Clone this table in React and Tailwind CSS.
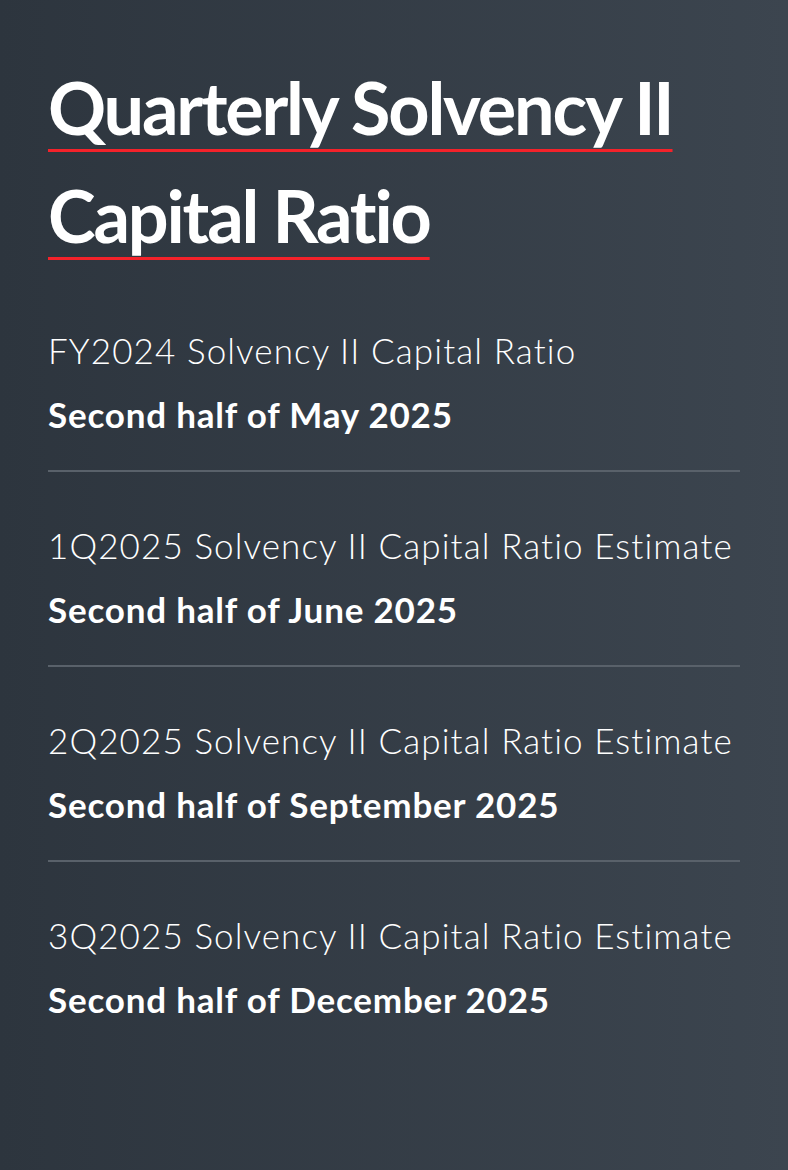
import React from 'react';

const items = [
  { title: 'FY2024 Solvency II Capital Ratio', date: 'Second half of May 2025' },
  { title: '1Q2025 Solvency II Capital Ratio Estimate', date: 'Second half of June 2025' },
  { title: '2Q2025 Solvency II Capital Ratio Estimate', date: 'Second half of September 2025' },
  { title: '3Q2025 Solvency II Capital Ratio Estimate', date: 'Second half of December 2025' },
];

const App = () => {
  return (
    <div className="min-h-[1170px] w-full bg-linear-to-r from-[#2d353e] to-[#3c454f] px-12 pt-[53px] pb-12 font-['Lato','Liberation_Sans',sans-serif] text-white">
      <h2 className="mb-2 text-[72px] font-bold leading-[108px] tracking-[-2.2px]">
        <span className="underline decoration-[#f4222a] decoration-[3px] underline-offset-[14px] [text-decoration-skip-ink:none]">
          Quarterly Solvency II Capital Ratio
        </span>
      </h2>

      <ul>
        {items.map((item, i) => (
          <li
            key={i}
            className={`pt-12 pb-[30px] ${i < items.length - 1 ? 'border-b-2 border-[#59616a]' : ''}`}
          >
            <p className="mb-[13px] text-[35px] font-light leading-[51px] tracking-[1.1px] text-white">{item.title}</p>
            <p className="text-[35px] font-bold leading-[51px] tracking-[0.8px]">{item.date}</p>
          </li>
        ))}
      </ul>
    </div>
  );
};

export default App;
